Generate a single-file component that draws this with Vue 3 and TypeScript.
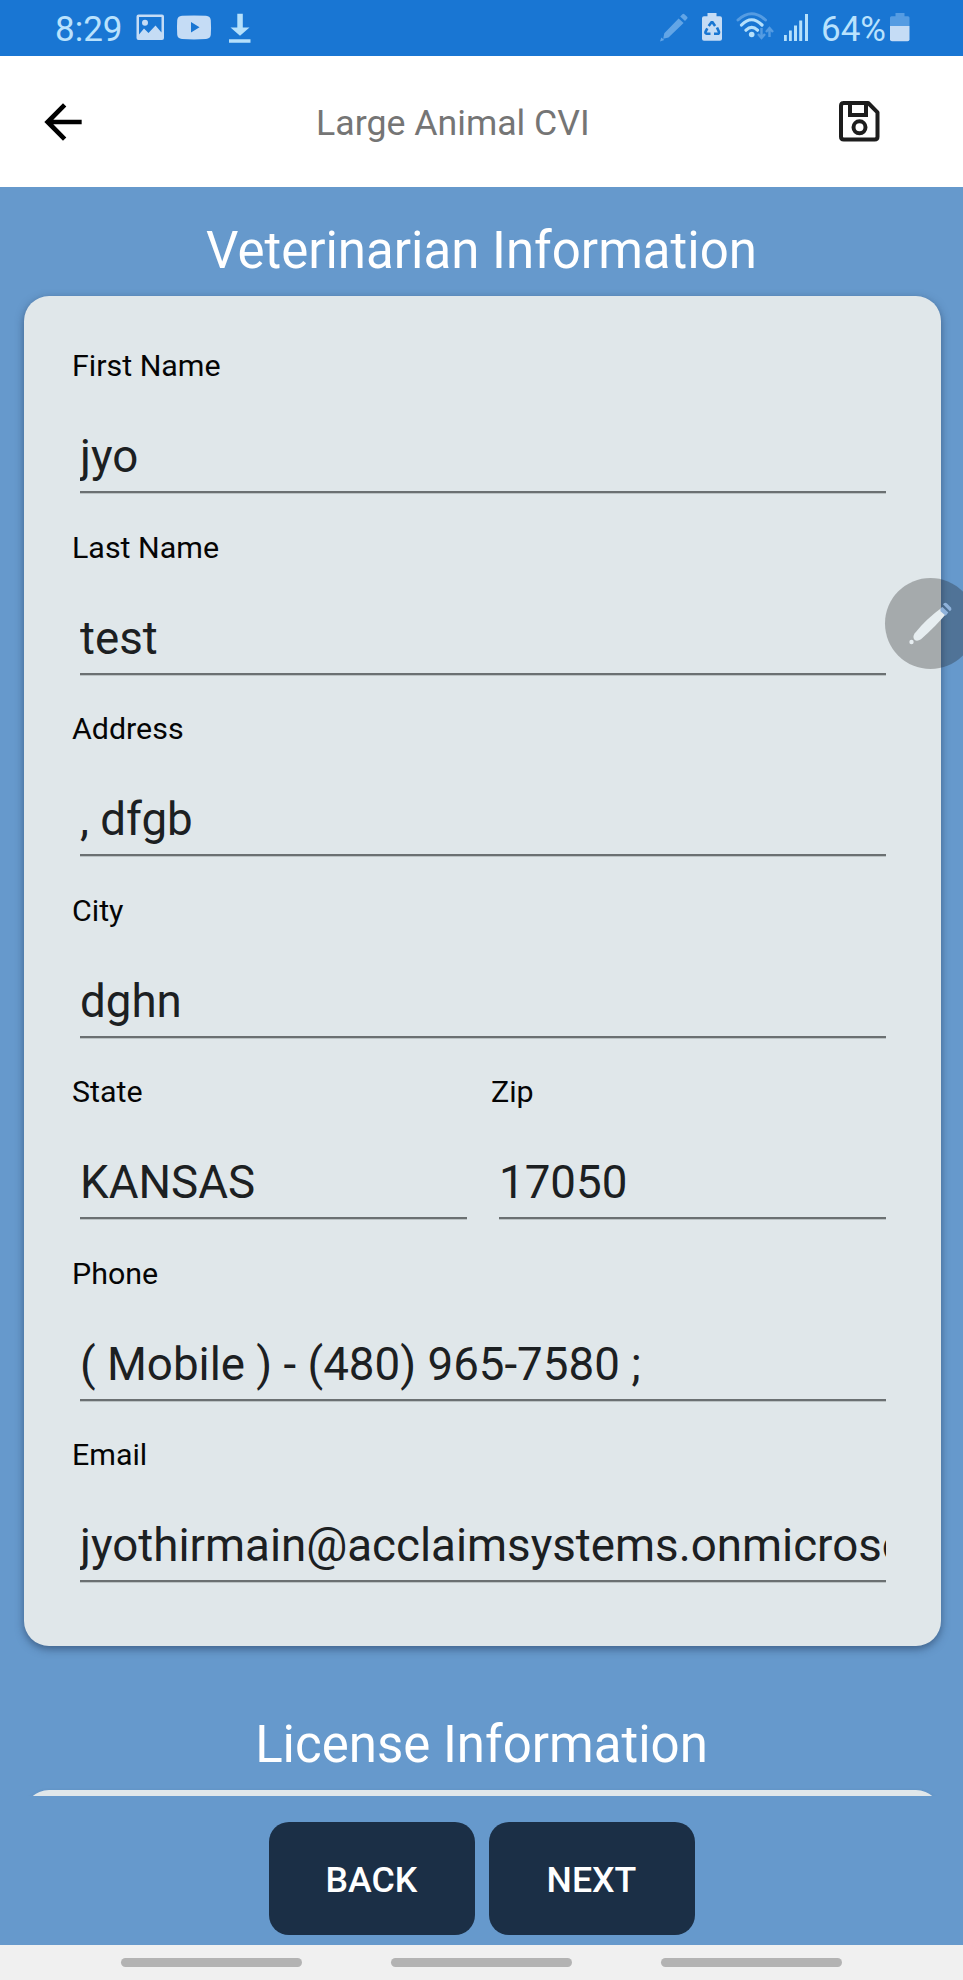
<script setup lang="ts">
interface Field {
  label: string
  value: string
}

const rows: Field[][] = [
  [{ label: 'First Name', value: 'jyo' }],
  [{ label: 'Last Name', value: 'test' }],
  [{ label: 'Address', value: ', dfgb' }],
  [{ label: 'City', value: 'dghn' }],
  [
    { label: 'State', value: 'KANSAS' },
    { label: 'Zip', value: '17050' },
  ],
  [{ label: 'Phone', value: '( Mobile ) - (480) 965-7580 ;' }],
  [{ label: 'Email', value: 'jyothirmain@acclaimsystems.onmicroso' }],
]
const actions: string[] = ['BACK', 'NEXT']
</script>

<template>
  <div class="screen">
    <div class="status">
      <span class="status-text">8:29</span>
      <svg class="ic-left" width="116" height="32" viewBox="0 0 116 32">
        <path fill="#c5dcf5" fill-rule="evenodd" d="M2.500 .500h23.500q2 0 2 2v21.500q0 2-2 2H2.500q-2 0-2-2V2.500q0-2 2-2zM3 3v17.500l5-6 4.500 4.500 7-7.500 6 7V3z" />
        <circle cx="9" cy="8.800" r="3" fill="#c5dcf5" />
        <path fill="#c5dcf5" fill-rule="evenodd" d="M46 1.800q12-.7 24 0 4.500.3 4.800 4.500.5 7.500 0 14.500-.4 3.800-4.800 4.200-12 .8-24 0-4.400-.4-4.800-4.200-.5-7.500 0-14.500.3-4.200 4.800-4.500zM55 8v10.600l8.500-5.300z" />
        <path fill="#b5e0fb" d="M101.300-.2h5.500v13.700h6.700L104 21.700l-9.500-8.200h6.800zM93 25.300h21.500v3.400H93z" />
      </svg>
      <svg class="ic-right" width="150" height="32" viewBox="0 0 150 32">
        <g fill="#62a5e6">
          <path d="M0 28.500l1.300-4 3 2.600zM4.300 20.200l14.300-14.800 5 4.700L8.500 24.600l-5.300 1.200z" />
          <path d="M20.200 3.600l2.200-2.300q1-1 2-.1l2.700 2.500q1 1 0 2l-2.100 2.200z" />
        </g>
        <path fill="#c5dcf5" d="M47.500 0h9v3.300h3.500q2 0 2 2v20.500q0 2-2 2H44q-2 0-2-2V5.300q0-2 2-2h3.500z" />
        <g fill="none" stroke="#1976d2" stroke-width="2.600">
          <path d="M48.700 13l2.800-3.800h1l2.600 3.800" />
          <path d="M57 14.500l2 4.500q.3 1.700-1.500 1.700h-3.500" />
          <path d="M50.500 20.700h-3.800q-1.700-.2-1.200-1.900l1.800-3.500" />
        </g>
        <g fill="none" stroke-linecap="round">
          <path stroke="#559ce2" stroke-width="3" d="M78 7Q91.500-5.500 105.500 7" />
          <path stroke="#b5e0fb" stroke-width="3.200" d="M81.500 12Q91.500 1.500 102 12M86 17.200Q91.800 11.500 97.500 17.200" />
        </g>
        <circle cx="91.700" cy="21.500" r="2.800" fill="#b5e0fb" />
        <path fill="none" stroke="#559ce2" stroke-width="2.400" d="M101.500 15v9M98 21l3.500 4 3.500-4M109.500 24v-8M106 19l3.500-4 3.500 4" />
        <path fill="#b5e0fb" d="M124 22h2.800v6H124zM129 17.500h2.800V28H129zM134 12.500h3V28h-3zM139.200 7.500h3V28h-3zM145 1h3v27h-3z" />
      </svg>
      <span class="status-text pct">64%</span>
      <svg class="batt" width="20" height="30" viewBox="0 0 20 30">
        <path fill="#559ce2" d="M5.500 0h9v3.300H18q1.500 0 1.500 1.500V13H0V4.800q0-1.500 1.500-1.500h4z" />
        <path fill="#c5dcf5" d="M0 13h19.500v13.200q0 2-2 2H2q-2 0-2-2z" />
      </svg>
    </div>

    <header class="bar">
      <svg class="back" width="56" height="56" viewBox="0 0 24 24">
        <path d="M20 11H7.830l5.590-5.590L12 4l-8 8 8 8 1.410-1.410L7.830 13H20z" />
      </svg>
      <h1 class="bar-title">Large Animal CVI</h1>
      <svg class="save" width="41" height="41" viewBox="0 0 41 41">
        <g fill="none" stroke="#1d1d1d" stroke-width="4">
          <path stroke-linejoin="round" d="M4.300 2h24.900l9.300 9.300v24.400q0 2.800-2.800 2.800H4.800Q2 38.500 2 35.700V4.800Q2 2 4.800 2z" />
          <path d="M11 2v12h16V2" />
          <circle cx="20.500" cy="26.300" r="6" />
        </g>
      </svg>
    </header>

    <main class="content">
      <h2 class="section first">Veterinarian Information</h2>
      <section class="card">
        <div v-for="(row, i) in rows" :key="i" class="row">
          <div v-for="f in row" :key="f.label" class="field">
            <div class="label">{{ f.label }}</div>
            <div class="value">{{ f.value }}</div>
          </div>
        </div>
      </section>
      <h2 class="section second">License Information</h2>
      <section class="card peek"></section>
    </main>

    <footer class="actions">
      <button v-for="a in actions" :key="a" class="btn">{{ a }}</button>
    </footer>
    <nav class="nav"><i v-for="n in 3" :key="n"></i></nav>

    <div class="fab">
      <svg width="91" height="91" viewBox="0 0 91 91">
        <path fill="#e6edf0" d="M57 29.500l5 5.300Q51 48 36 61.300q-4 2.600-6.500.5-2.300-2.600.3-6.500Q41 41 57 29.500z" />
        <path fill="#8fb2da" d="M55.500 30.600l2-1.600 5.800 5.500-2.600 3.300-5.200-4.500zM58 26.300q1.700-2.800 4-.8l4.200 4.200q1 2-1.300 3.600z" />
        <circle cx="26.500" cy="64" r="2.200" fill="#e6edf0" />
      </svg>
    </div>
  </div>
</template>

<style>
body {
  margin: 0;
  background: #6699cc;
}
</style>

<style scoped>
.screen {
  position: relative;
  width: 963px;
  height: 1980px;
  overflow: hidden;
  display: flex;
  flex-direction: column;
  background: #6699cc;
  font-family: Roboto, "Liberation Sans", sans-serif;
}
.status {
  flex: none;
  height: 56px;
  box-sizing: border-box;
  padding-left: 55px;
  display: flex;
  align-items: flex-start;
  background: #1976d3;
}
.status-text {
  width: 67px;
  font-size: 35px;
  line-height: 59px;
  color: #b9e2fd;
  white-space: nowrap;
}
.ic-left {
  margin: 14px 0 0 14px;
  overflow: visible;
}
.ic-right {
  margin: 13px 0 0 408px;
  overflow: visible;
}
.status-text.pct {
  margin-left: 11px;
}
.batt {
  margin: 13px 0 0 2px;
}
.bar {
  flex: none;
  height: 131px;
  display: flex;
  align-items: center;
  background: #fff;
}
.back {
  margin-left: 35px;
}
.bar-title {
  margin: 2px 0 0 225px;
  width: 523px;
  font-size: 35.700px;
  line-height: 42px;
  font-weight: 400;
  color: #757575;
}
.save {
  margin-bottom: 1px;
}
.content {
  flex: none;
  height: 1609px;
  overflow: hidden;
}
.section {
  margin: 0;
  font-size: 51px;
  line-height: 62px;
  font-weight: 400;
  color: #fff;
  text-align: center;
}
.first {
  padding: 33px 0 14px;
}
.second {
  padding: 68px 0 14px;
}
.card {
  box-sizing: border-box;
  margin: 0 22px 0 24px;
  height: 1350px;
  padding: 52px 55px 0 48px;
  border-radius: 25px;
  background: #e0e7ea;
  box-shadow: 0 3px 8px rgba(30, 50, 80, 0.55);
}
.card.peek {
  box-shadow: 0 3px 5px rgba(30, 50, 80, 0.3);
}
.row {
  height: 181.500px;
  display: flex;
  gap: 24px;
}
.field {
  flex: 1;
  min-width: 0;
}
.label {
  font-size: 30.400px;
  line-height: 36px;
  color: #050505;
}
.value {
  margin: 44px 0 0 8px;
  height: 63px;
  border-bottom: 2px solid #6b7072;
  box-shadow: 0 1px 0 rgba(107, 112, 114, 0.3);
  overflow: hidden;
  font-size: 45.700px;
  line-height: 58px;
  color: #1c2022;
  white-space: nowrap;
}
.actions {
  flex: none;
  height: 149px;
  display: flex;
  justify-content: center;
  align-items: flex-start;
  gap: 14px;
}
.btn {
  margin: 26px 0 0;
  padding: 3px 0 0;
  width: 206px;
  height: 113px;
  border: 0;
  border-radius: 20px;
  background: #1b2f46;
  color: #fff;
  font: 500 35.700px Roboto, "Liberation Sans", sans-serif;
}
.nav {
  flex: none;
  height: 35px;
  display: flex;
  justify-content: center;
  align-items: center;
  gap: 89px;
  background: #f0f0f0;
}
.nav i {
  width: 181px;
  height: 9px;
  border-radius: 5px;
  background: #b3b3b3;
}
.fab {
  position: absolute;
  left: 885px;
  top: 578px;
  width: 91px;
  height: 91px;
  border-radius: 50%;
  background: rgba(30, 30, 30, 0.3);
}
</style>
